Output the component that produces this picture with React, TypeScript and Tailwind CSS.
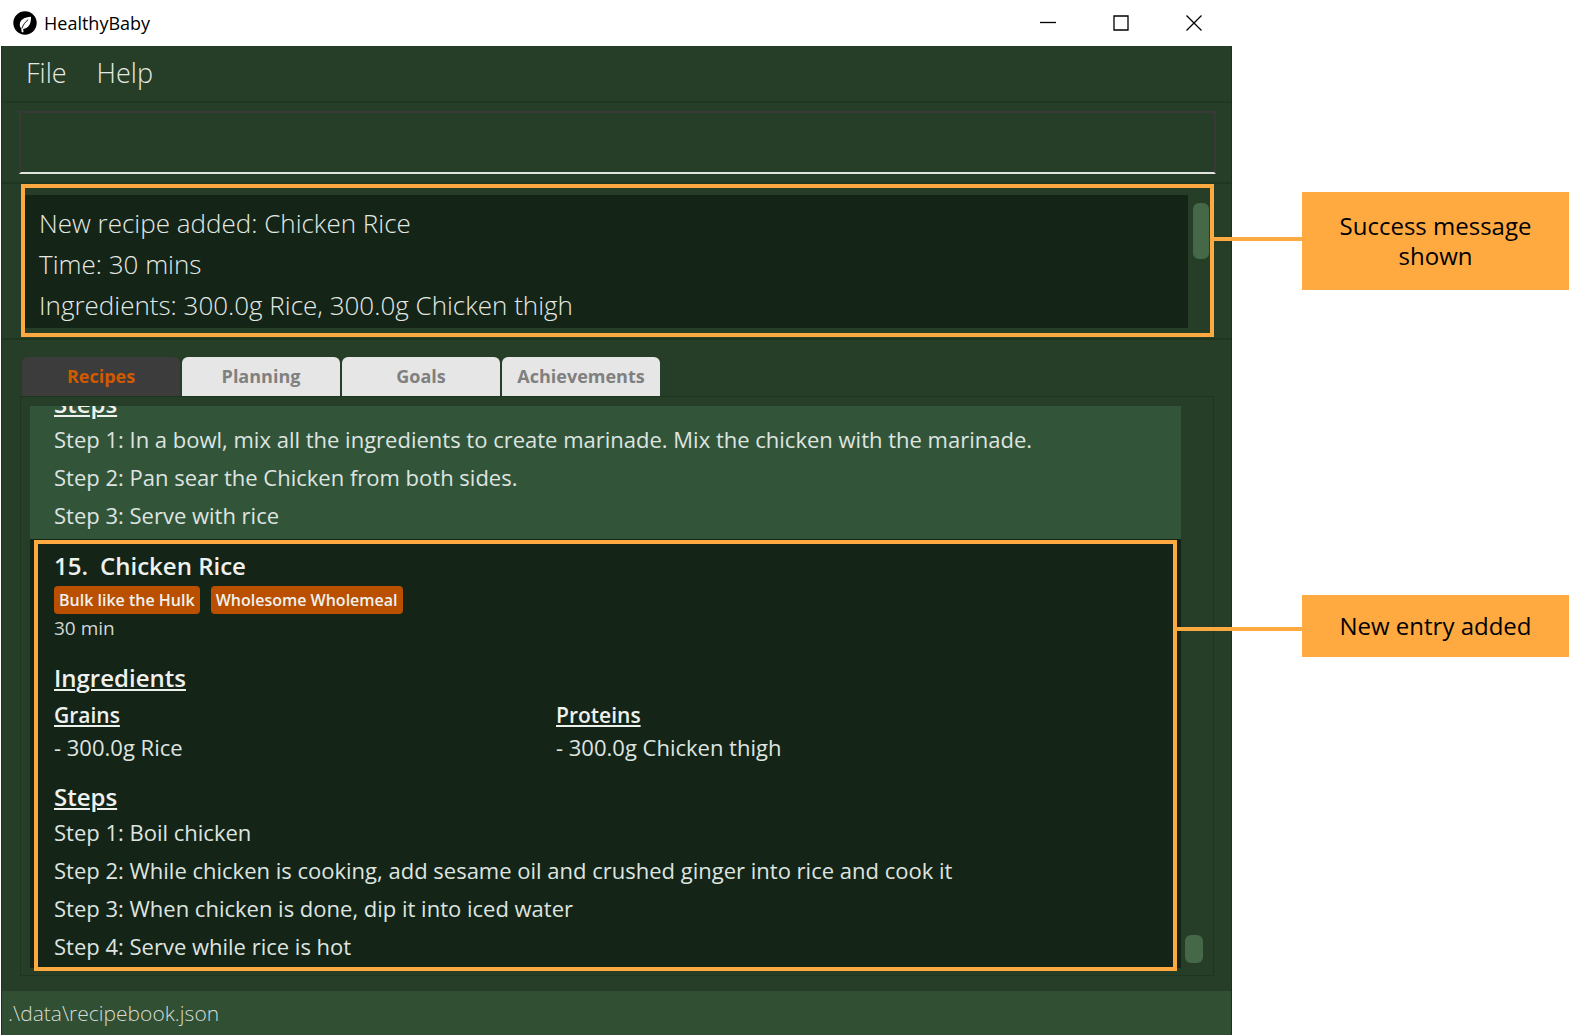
import { useState, type ReactNode } from 'react';

function Callout({ text, lineClass, boxClass }: { text: string; lineClass: string; boxClass: string }) {
  return (
    <aside className="absolute left-full top-0 z-10 flex items-start">
      <span className={`h-1 bg-[#ffaa40] ${lineClass}`} />
      <p className={`flex w-[267px] items-center justify-center bg-[#ffaa40] px-8 text-center text-[24px] leading-[30px] text-black ${boxClass}`}>
        {text}
      </p>
    </aside>
  );
}

function LeafLogo() {
  return (
    <svg className="size-6" viewBox="0 0 24 24" aria-hidden="true">
      <circle cx="12" cy="12" r="11.7" fill="#000" />
      <path d="M18 5.8C11.5 6 7 8.8 6.8 13.6c0 1.800.5 2.900 1.400 3.600L8.700 21.200h1.800l-.3-3.300C15.500 17.500 18.300 13 18 5.800Z" fill="#fff" />
      <path d="M15.200 8.600C12.200 11 10 14 8.900 17.500" stroke="#000" strokeWidth="0.9" fill="none" />
    </svg>
  );
}

function WindowButton({ label, children }: { label: string; children: ReactNode }) {
  return (
    <button aria-label={label} className="flex h-11 w-[73px] items-center justify-center">
      <svg className="size-4" viewBox="0 0 16 16" fill="none" stroke="#000" strokeWidth="1.3" aria-hidden="true">
        {children}
      </svg>
    </button>
  );
}

function Steps({ steps }: { steps: string[] }) {
  return (
    <ol className="text-[22px] leading-[38px] text-[#dfe4e0]">
      {steps.map((step, i) => (
        <li key={step}>{`Step ${i + 1}: ${step}`}</li>
      ))}
    </ol>
  );
}

function Ingredient({ group, item }: { group: string; item: string }) {
  return (
    <div>
      <h4 className="text-[21px] font-semibold leading-8 underline decoration-2 underline-offset-2">{group}</h4>
      <p className="text-[22px] leading-8 text-[#dfe4e0]">{`- ${item}`}</p>
    </div>
  );
}

const tabs = ['Recipes', 'Planning', 'Goals', 'Achievements'];
const message = 'New recipe added: Chicken Rice\nTime: 30 mins\nIngredients: 300.0g Rice, 300.0g Chicken thigh';

export default function App() {
  const [active, setActive] = useState('Recipes');
  const [command, setCommand] = useState('');

  return (
    <div className="min-h-screen overflow-hidden bg-white pl-px pr-[337px] font-['Open_Sans','Noto_Sans',sans-serif]">
      <div className="flex min-h-screen flex-col">
        <header className="flex h-[46px] items-center bg-white pl-3 pr-[2px]">
          <LeafLogo />
          <h1 className="ml-[7px] flex-1 text-[18px] leading-6 text-black">HealthyBaby</h1>
          <WindowButton label="Minimize"><path d="M0 7.500h16" /></WindowButton>
          <WindowButton label="Maximize"><path d="M1 1h14v14H1z" /></WindowButton>
          <WindowButton label="Close"><path d="m.5.5 15 15m0-15-15 15" /></WindowButton>
        </header>

        <div className="flex flex-1 flex-col border-x border-[#1b331d] bg-[#263d27]">
          <nav className="flex h-[57px] items-center gap-[30px] border-b-2 border-[#203722] pl-6 text-[27px] font-light text-[#e4e9e4]">
            <button>File</button>
            <button>Help</button>
          </nav>

          <div className="border-b-2 border-[#1e3520] pb-2 pl-[17px] pr-[15px] pt-2">
            <input
              aria-label="Command"
              value={command}
              onChange={(e) => setCommand(e.target.value)}
              className="block h-[63px] w-full border-2 border-[#383838] border-b-[#dfe4df] bg-transparent px-4 text-[26px] font-light text-white outline-none"
            />
          </div>

          <section className="relative mb-px ml-[19px] mr-[17px] flex h-[153px] border-4 border-[#ffaa40] pb-[5px] pt-[7px]">
            <textarea
              aria-label="Result"
              readOnly
              value={message}
              className="block flex-1 resize-none overflow-hidden bg-[#142417] px-[14px] pt-2 text-[26px] font-light leading-[41px] text-[#e4e9e4] outline-none"
            />
            <div className="w-[22px] pl-[5px] pt-2">
              <div className="h-[56px] w-4 rounded-md bg-[#456848]" />
            </div>
            <Callout text="Success message shown" lineClass="mt-[49px] w-[92px]" boxClass="mt-1 h-[98px]" />
          </section>

          <main className="flex flex-1 flex-col border-t-2 border-[#1e3520] pb-[15px] pl-[18px] pr-[17px] pt-[17px]">
            <div role="tablist" className="flex gap-[2px] pl-[2px]">
              {tabs.map((tab) => (
                <button
                  key={tab}
                  role="tab"
                  aria-selected={tab === active}
                  onClick={() => setActive(tab)}
                  className={`h-[39px] w-[158px] rounded-t-md text-[18px] font-bold ${
                    tab === active ? 'bg-[#3c3c3c] text-[#d05a00]' : 'bg-[#e6e6e6] text-[#808080]'
                  }`}
                >
                  {tab}
                </button>
              ))}
            </div>

            <div role="tabpanel" className="flex flex-1 border border-[#1e3520] px-[9px] pb-[7px] pt-[9px] text-[#eef1ee]">
              <div className="flex min-w-0 flex-1 flex-col bg-[#142417]">
                <article className="flex h-[133px] flex-col justify-end overflow-hidden bg-[#32553a] pb-[5px] pl-6">
                  <h3 className="text-[24px] font-semibold leading-8 underline decoration-2 underline-offset-2">Steps</h3>
                  <Steps
                    steps={[
                      'In a bowl, mix all the ingredients to create marinade. Mix the chicken with the marinade.',
                      'Pan sear the Chicken from both sides.',
                      'Serve with rice',
                    ]}
                  />
                </article>
                <article className="relative -mb-[3px] ml-1 mr-1 mt-px flex-1 border-4 border-[#ffaa40] pb-[2px] pl-4 pt-1">
                  <h2 className="flex gap-3 text-[24px] font-semibold leading-9">
                    <span>15.</span>
                    <span>Chicken Rice</span>
                  </h2>
                  <div className="mt-[2px] flex gap-[11px] text-[16px] font-semibold leading-7">
                    <span className="rounded bg-[#bb4f00] px-[5px]">Bulk like the Hulk</span>
                    <span className="rounded bg-[#bb4f00] px-[5px]">Wholesome Wholemeal</span>
                  </div>
                  <p className="text-[19px] leading-7 text-[#d3d9d4]">30 min</p>
                  <h3 className="mt-5 text-[24px] font-semibold leading-8 underline decoration-2 underline-offset-2">Ingredients</h3>
                  <div className="mt-[5px] grid grid-cols-[502px_1fr]">
                    <Ingredient group="Grains" item="300.0g Rice" />
                    <Ingredient group="Proteins" item="300.0g Chicken thigh" />
                  </div>
                  <h3 className="mt-[18px] text-[24px] font-semibold leading-8 underline decoration-2 underline-offset-2">Steps</h3>
                  <Steps
                    steps={[
                      'Boil chicken',
                      'While chicken is cooking, add sesame oil and crushed ginger into rice and cook it',
                      'When chicken is done, dip it into iced water',
                      'Serve while rice is hot',
                    ]}
                  />
                  <Callout text="New entry added" lineClass="mt-[83px] w-[129px]" boxClass="mt-[51px] h-[62px]" />
                </article>
              </div>
              <div className="flex w-[23px] flex-col justify-end pb-[5px] pl-1">
                <div className="h-7 w-[18px] rounded-md bg-[#456848]" />
              </div>
            </div>
          </main>

          <footer className="h-11 bg-[#304f33] pl-[6px] text-[21px] font-light leading-[44px] text-[#d5dcd5]">
            .\data\recipebook.json
          </footer>
        </div>
      </div>
    </div>
  );
}
